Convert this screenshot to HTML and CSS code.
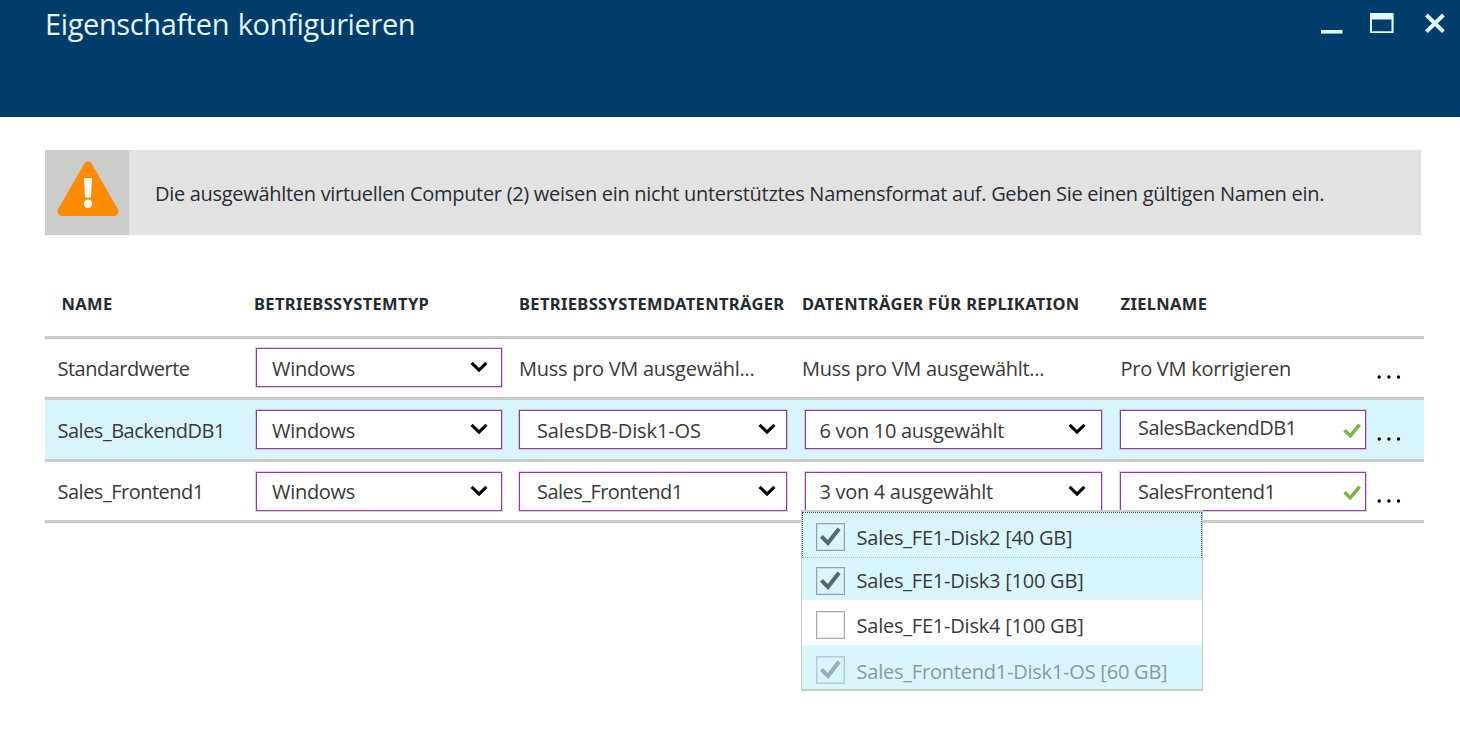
FILE: index.html
```html
<!DOCTYPE html>
<html lang="de">
<head>
<meta charset="utf-8">
<title>Eigenschaften konfigurieren</title>
<link rel="stylesheet" href="styles.css">
</head>
<body>
<svg class="defs" width="0" height="0" aria-hidden="true">
  <symbol id="chevron" viewBox="0 0 18 12"><path d="M1.6 1.8 L9 9 L16.4 1.8" fill="none" stroke="#000" stroke-width="3.1"/></symbol>
  <symbol id="tick" viewBox="0 0 18 15"><path d="M1.5 7.2 L7.3 12.8 L16.6 1.6" fill="none" stroke="#76b843" stroke-width="3.5"/></symbol>
  <symbol id="check" viewBox="0 0 26 26"><path d="M4.4 12.3 L11 19 L22 4.8" fill="none" stroke="currentColor" stroke-width="4"/></symbol>
  <symbol id="dots" viewBox="0 0 24 4"><circle cx="2.2" cy="2" r="1.7"/><circle cx="11.9" cy="2" r="1.7"/><circle cx="21.5" cy="2" r="1.7"/></symbol>
</svg>

<header class="header">
  <h1 class="title">Eigenschaften konfigurieren</h1>
  <svg class="controls" width="126" height="24" viewBox="0 0 126 24">
    <g fill="#e2f7ff">
      <rect x="1" y="19" width="21.5" height="3.6"/>
      <path fill-rule="evenodd" d="M50 2h23.6v20H50z M52 8.5v11.7h19.5V8.5z"/>
    </g>
    <path d="M106.4 4 L123.4 20.6 M123.4 4 L106.4 20.6" stroke="#e2f7ff" stroke-width="4" fill="none"/>
  </svg>
</header>

<main class="content">
  <section class="banner">
    <div class="banner-icon">
      <svg width="64" height="56" viewBox="0 0 64 56">
        <path d="M32 5 L58 50.5 H6 Z" fill="#ff8c00" stroke="#ff8c00" stroke-width="9" stroke-linejoin="round"/>
        <path d="M28 17h8l-1 19.5h-6z" fill="#fffdf2"/>
        <circle cx="32" cy="42.7" r="4.2" fill="#fffdf2"/>
      </svg>
    </div>
    <p class="banner-text">Die ausgewählten virtuellen Computer (2) weisen ein nicht unterstütztes Namensformat auf. Geben Sie einen gültigen Namen ein.</p>
  </section>

  <section class="table">
    <div class="row head">
      <div class="cell-name">NAME</div>
      <div>BETRIEBSSYSTEMTYP</div>
      <div class="cell-disk">BETRIEBSSYSTEMDATENTRÄGER</div>
      <div>DATENTRÄGER FÜR REPLIKATION</div>
      <div class="cell-target">ZIELNAME</div>
    </div>

    <div class="row first">
      <div class="cell-name">Standardwerte</div>
      <div class="cell-os"><div class="field">Windows<svg class="chevron"><use href="#chevron"/></svg></div></div>
      <div class="cell-disk plain">Muss pro VM ausgewähl...</div>
      <div class="plain">Muss pro VM ausgewählt...</div>
      <div class="cell-target plain">Pro VM korrigieren</div>
      <div class="cell-more"><svg class="dots"><use href="#dots"/></svg></div>
    </div>

    <div class="row selected">
      <div class="cell-name">Sales_BackendDB1</div>
      <div class="cell-os"><div class="field">Windows<svg class="chevron"><use href="#chevron"/></svg></div></div>
      <div class="cell-disk"><div class="field"><span class="loose">SalesDB-Disk1-OS</span><svg class="chevron"><use href="#chevron"/></svg></div></div>
      <div class="cell-repl"><div class="field">6 von 10 ausgewählt<svg class="chevron"><use href="#chevron"/></svg></div></div>
      <div class="cell-target"><div class="field raised"><span class="tight">SalesBackendDB1</span><svg class="tick"><use href="#tick"/></svg></div></div>
      <div class="cell-more"><svg class="dots"><use href="#dots"/></svg></div>
    </div>

    <div class="row last">
      <div class="cell-name">Sales_Frontend1</div>
      <div class="cell-os"><div class="field">Windows<svg class="chevron"><use href="#chevron"/></svg></div></div>
      <div class="cell-disk"><div class="field"><span class="tight">Sales_Frontend1</span><svg class="chevron"><use href="#chevron"/></svg></div></div>
      <div class="cell-repl">
        <div class="field">3 von 4 ausgewählt<svg class="chevron"><use href="#chevron"/></svg></div>
        <div class="menu">
          <div class="option focused"><span class="box"><svg><use href="#check"/></svg></span><span class="label">Sales_FE1-Disk2 [40 GB]</span></div>
          <div class="option second"><span class="box"><svg><use href="#check"/></svg></span><span class="label">Sales_FE1-Disk3 [100 GB]</span></div>
          <div class="option empty"><span class="box"></span><span class="label">Sales_FE1-Disk4 [100 GB]</span></div>
          <div class="option disabled"><span class="box"><svg><use href="#check"/></svg></span><span class="label">Sales_Frontend1-Disk1-OS [60 GB]</span></div>
        </div>
      </div>
      <div class="cell-target"><div class="field"><span class="tight">SalesFrontend1</span><svg class="tick"><use href="#tick"/></svg></div></div>
      <div class="cell-more"><svg class="dots"><use href="#dots"/></svg></div>
    </div>
  </section>
</main>
</body>
</html>
```
FILE: styles.css
```css
* { box-sizing: border-box; }

body {
  margin: 0;
  min-height: 745px;
  background: #fff;
  color: #3a393b;
  font-family: "Open Sans", "Noto Sans", sans-serif;
  font-size: 20px;
  letter-spacing: -0.3px;
}

svg { display: block; flex: none; }
.defs { position: absolute; }

.header {
  height: 117px;
  padding: 11px 14px 0 45px;
  display: flex;
  justify-content: space-between;
  align-items: flex-start;
  background: #003d6b;
  color: #e2f7ff;
}

.title {
  margin: -7px 0 0;
  font-size: 29px;
  line-height: 40px;
  font-weight: 400;
  letter-spacing: -0.38px;
  word-spacing: 1.5px;
}

.content { padding: 33px 36px 0 45px; }

.banner {
  display: flex;
  width: 1376px;
  height: 85px;
  background: #e2e2e2;
}

.banner-icon {
  width: 84px;
  padding: 11px 0 0 11px;
  background: #cbcdcb;
}

.banner-text {
  margin: 0;
  padding-left: 26px;
  line-height: 87px;
  color: #2b2e35;
  white-space: nowrap;
}

.table { margin-top: 44px; }

.row {
  display: grid;
  grid-template-columns: 209px 264px 284px 317px 256px 49px;
  align-items: start;
  border-bottom: 3px solid #cbcbcb;
  line-height: 40px;
  white-space: nowrap;
}

.head {
  height: 60px;
  padding-top: 5px;
  font: 700 16.5px/39px "Noto Sans", sans-serif;
  letter-spacing: 0.35px;
  color: #252a31;
}

.first { height: 61px; padding-top: 9px; }
.selected { height: 62px; padding-top: 10px; background: #d9f5fe; }
.last { height: 61px; padding-top: 10px; }

.cell-name { padding-left: 12.5px; letter-spacing: -0.5px; line-height: 42px; }
.head .cell-name { padding-left: 16.5px; letter-spacing: inherit; line-height: inherit; }
.last .cell-name { line-height: 40px; }
.cell-os { padding: 0 16px 0 2px; }
.cell-disk { padding: 0 15px 0 1px; }
.cell-repl { padding: 0 17px 0 3px; position: relative; }
.cell-target { padding: 0 9px 0 1px; }
.cell-more { padding: 27px 0 0 2px; }
.head .cell-disk, .head .cell-target, .plain { padding-right: 0; }
.head .cell-target, .cell-target.plain { padding-left: 1.5px; }
.plain { line-height: 42px; letter-spacing: -0.27px; }

.tight { letter-spacing: -0.54px; }
.loose { letter-spacing: -0.12px; }

.field {
  height: 39px;
  display: flex;
  justify-content: space-between;
  align-items: flex-start;
  padding: 0 13px 0 15px;
  border: 1px solid #8f3d9f;
  box-shadow: 0 0 0 1px rgba(143, 61, 159, 0.25);
  background: #fff;
  line-height: 39px;
}

.cell-disk .field { padding: 0 10px 0 17px; }
.cell-repl .field { padding: 0 15px 0 13.5px; }
.cell-target .field { padding: 0 4px 0 17px; }
.last .field { line-height: 37px; }
.field.raised { line-height: 33px; }

.chevron { width: 18px; height: 12px; margin-top: 12px; }
.tick { width: 18px; height: 15px; margin-top: 12px; }
.dots { width: 24px; height: 4px; }

.menu {
  position: absolute;
  z-index: 1;
  left: -1px;
  top: 38px;
  width: 402px;
  height: 181px;
  border: 1px solid #c9cccd;
  border-top-width: 2px;
  border-bottom-width: 2px;
  background: #fff;
}

.option {
  display: flex;
  height: 45px;
  padding: 11px 0 0 14px;
  background: #d9f5fe;
}

.focused {
  height: 46px;
  padding: 10px 0 0 13px;
  border: 1px dotted #3f5058;
  border-bottom-color: #a5c1cc;
}

.second { height: 42px; padding-top: 9px; }
.empty { background: #fff; }
.disabled { height: 44px; }

.box {
  flex: none;
  width: 29px;
  height: 28px;
  margin-right: 11.5px;
  border: 1px solid #92a4ab;
  box-shadow: inset 0 0 0 1px rgba(120, 140, 148, 0.2);
  color: #5a676c;
}

.box svg { width: 26px; height: 26px; }
.empty .box { border-color: #a9a9a9; }
.disabled .box { border-color: #b3cdd5; color: #99adb4; }
.label { line-height: 30px; letter-spacing: -0.22px; }
.second .label { line-height: 28px; }
.disabled .label { line-height: 31px; color: #8a9a9f; }
```
